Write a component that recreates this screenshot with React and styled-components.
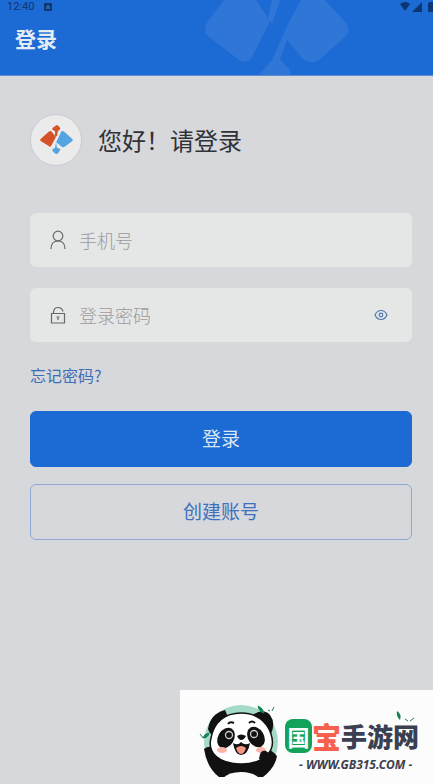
import React, { useState } from 'react';
import styled, { createGlobalStyle } from 'styled-components';

const blue = '#1c6ad3';
const cjk = '"Noto Sans CJK SC", sans-serif';

const GlobalStyle = createGlobalStyle`
  *, *::before, *::after {
    box-sizing: border-box;
  }
  body {
    margin: 0;
    background: #d6d8dc;
    font-family: ${cjk};
  }
`;

const Page = styled.div`
  min-height: 100vh;
  display: flex;
  flex-direction: column;
`;

const Header = styled.header`
  position: relative;
  overflow: hidden;
  height: 76px;
  background: ${blue};
  border-bottom: 1px solid #5f8fd2;
`;

const Watermark = styled.svg`
  position: absolute;
  top: 0;
  right: 83px;
  width: 146px;
  height: 75px;
  fill: #3076d6;
`;

const StatusBar = styled.div`
  position: relative;
  display: flex;
  align-items: center;
  height: 14px;
  padding-left: 7px;
  gap: 10px;
  color: #0d3672;
  font-family: Roboto, sans-serif;
  font-size: 11px;
  line-height: 14px;
`;

const StatusIcons = styled.svg`
  margin-left: auto;
  width: 34px;
  height: 14px;
`;

const Title = styled.h1`
  position: relative;
  margin: 9px 0 0 15px;
  color: #e4ecf6;
  font-size: 21px;
  font-weight: 700;
  line-height: 30px;
`;

const Form = styled.form`
  display: flex;
  flex-direction: column;
  padding: 38px 21px 0 30px;
`;

const Greeting = styled.div`
  display: flex;
  align-items: center;
  gap: 16px;
  margin-bottom: 47px;
`;

const Avatar = styled.svg`
  width: 52px;
  height: 52px;
  border: 1px solid #c9cbcf;
  border-radius: 50%;
  background: #ebebeb;
`;

const Hello = styled.h2`
  margin: 0;
  color: #303236;
  font-size: 24px;
  font-weight: 400;
  line-height: 36px;
`;

const Field = styled.label`
  display: flex;
  align-items: center;
  height: 54px;
  margin-bottom: 21px;
  padding: 0 24px 0 19px;
  gap: 12px;
  border-radius: 6px;
  background: #e5e6e6;
`;

const FieldIcon = styled.svg`
  flex: none;
  width: 18px;
  height: 20px;
  fill: none;
  stroke: #66686c;
  stroke-width: 1.2;
`;

const Input = styled.input`
  flex: 1;
  min-width: 0;
  padding: 0;
  border: 0;
  outline: none;
  background: none;
  color: #303236;
  font-family: ${cjk};
  font-size: 18px;
  font-weight: 300;
  line-height: 26px;
  &::placeholder {
    color: #999b9e;
    opacity: 1;
  }
`;

const EyeButton = styled.button`
  display: flex;
  padding: 0;
  border: 0;
  background: none;
  color: #4d79b4;
  cursor: pointer;
`;

const ForgotLink = styled.a`
  align-self: flex-start;
  margin-bottom: 24px;
  color: #3e6db4;
  font-size: 16px;
  line-height: 24px;
  text-decoration: none;
`;

const Button = styled.button`
  height: 56px;
  margin-bottom: 17px;
  padding: 0 0 2px;
  border: 1px solid ${({ $outline }) => ($outline ? '#91a9d2' : blue)};
  border-radius: 6px;
  background: ${({ $outline }) => ($outline ? 'transparent' : blue)};
  color: ${({ $outline }) => ($outline ? '#3e70bd' : '#dbe6f4')};
  font-family: ${cjk};
  font-size: 19px;
  line-height: 28px;
  cursor: pointer;
`;

const Brand = styled.footer`
  display: flex;
  align-self: flex-end;
  width: 253px;
  height: 94px;
  margin-top: auto;
  padding: 12px 12px 0 13px;
  background: #fcfcfc;
`;

const Panda = styled.svg`
  flex: none;
  width: 88px;
  height: 80px;
`;

const BrandText = styled.div`
  position: relative;
  display: flex;
  flex-direction: column;
  padding-top: 15px;
  padding-left: 4px;
`;

const BrandName = styled.div`
  display: flex;
  align-items: center;
  height: 38px;
  color: #3a4050;
  font-size: 26px;
  font-weight: 900;
  line-height: 36px;
  white-space: nowrap;
`;

const Seal = styled.span`
  display: flex;
  align-items: center;
  justify-content: center;
  width: 27px;
  height: 34px;
  border-radius: 8px;
  background: #12a35a;
  color: #fcfcfc;
  font-size: 22px;
  font-weight: 700;
`;

const Treasure = styled.span`
  color: #f7604f;
  font-size: 29px;
`;

const Leaves = styled.svg`
  position: absolute;
  top: 8px;
  right: 3px;
  width: 20px;
  height: 14px;
`;

const BrandUrl = styled.div`
  padding-left: 14px;
  color: #3a4050;
  font-family: 'Noto Sans', sans-serif;
  font-size: 12px;
  font-style: italic;
  font-weight: 700;
  line-height: 20px;
  white-space: nowrap;
`;

export default function App() {
  const [visible, setVisible] = useState(false);

  return (
    <Page>
      <GlobalStyle />
      <Header>
        <Watermark viewBox="0 0 146 75" aria-hidden="true">
          <path d="M20 0H52L66 21L48 57Q43 65 35 60L4 36Q-2 30 4 21Z" />
          <path d="M68 0H76L68 24L64 18Z" />
          <path d="M97 0H121L141 22Q148 30 141 37L115 60Q107 65 99 59L83 40L76 59L86 70V75H55L68 60L84 24Z" />
        </Watermark>
        <StatusBar>
          <span>12:40</span>
          <svg width="8" height="8" viewBox="0 0 8 8" aria-hidden="true">
            <rect width="8" height="8" rx="1" fill="#0d3672" />
            <path d="M2 6L4 2L6 6M3 5H5" fill="none" stroke="#3c74c0" />
          </svg>
          <StatusIcons viewBox="0 0 34 14" aria-hidden="true" fill="#0d3672">
            <path d="M1 4Q6 0 11 4L6 11Z" />
            <path d="M23 2V12H13Z" />
            <path d="M29 3H30V2H34V12H29Z" />
          </StatusIcons>
        </StatusBar>
        <Title>登录</Title>
      </Header>

      <Form onSubmit={(e) => e.preventDefault()}>
        <Greeting>
          <Avatar viewBox="0 0 52 52" aria-hidden="true">
            <path d="M10 25L19 17Q21 16 22 18L26 23L21 32Q20 34 18 32L10 27Q9 26 10 25Z" fill="#d6532a" />
            <path d="M25 22L25 17L22 15Q22 14 23 13L26 11Q27 10 28 11L30 13Q31 14 30 15L28 17L27 22Z" fill="#d6532a" />
            <path d="M43 25L34 17Q32 16 31 18L26 28L32 33Q33 34 35 33L43 27Q44 26 43 25Z" fill="#54a4e2" />
            <path d="M26 28L25 34L22 36Q22 37 23 38L25 40Q27 41 28 40L30 37Q31 36 30 35L27 34Z" fill="#54a4e2" />
            <path d="M30 18L22 34" stroke="#ebebeb" strokeWidth="2" />
          </Avatar>
          <Hello>您好！请登录</Hello>
        </Greeting>

        <Field>
          <FieldIcon viewBox="0 0 18 20" aria-hidden="true">
            <circle cx="9" cy="6" r="4.800" />
            <path d="M2 19Q2 11 9 11Q16 11 16 19" />
          </FieldIcon>
          <Input type="tel" placeholder="手机号" aria-label="手机号" />
        </Field>

        <Field>
          <FieldIcon viewBox="0 0 18 20" aria-hidden="true">
            <path d="M2.500 8.500H15.500V18H2.500Z" />
            <path d="M4.500 8.500V7Q5 2.500 9 2.500Q13 2.500 14 6.500" />
            <path d="M7.500 12H10.500M9 12V15" />
          </FieldIcon>
          <Input
            type={visible ? 'text' : 'password'}
            placeholder="登录密码"
            aria-label="登录密码"
          />
          <EyeButton
            type="button"
            aria-label="显示密码"
            onClick={() => setVisible(!visible)}
          >
            <svg width="14" height="12" viewBox="0 0 14 12" fill="none" stroke="currentColor" strokeWidth="1.2">
              <path d="M1 6Q3 1.500 7 1.500Q11 1.500 13 6Q11 10.500 7 10.500Q3 10.500 1 6Z" />
              <circle cx="7" cy="6" r="1.800" />
            </svg>
          </EyeButton>
        </Field>

        <ForgotLink href="#forgot">忘记密码?</ForgotLink>
        <Button type="submit">登录</Button>
        <Button type="button" $outline>创建账号</Button>
      </Form>

      <Brand>
        <Panda viewBox="0 0 88 80" aria-hidden="true">
          <circle cx="48" cy="40" r="37" fill="#a5dac8" />
          <path d="M11 47Q17 42 24 48L34 56H62L68 48Q75 44 84 54Q82 66 70 75H26Q14 66 11 47Z" fill="#111" />
          <path d="M15 27Q17 12 32 8L36 17L22 34Q17 33 15 27Z" fill="#111" />
          <path d="M58 14Q70 5 77 13Q83 21 78 32L70 30Z" fill="#111" />
          <path d="M48 11C64 11 74 20 78 32C84 50 70 62 48 62C26 62 14 51 18 36C21 20 32 11 48 11Z" fill="#fff" stroke="#111" strokeWidth="1.500" />
          <ellipse cx="33" cy="36" rx="8" ry="11" fill="#111" transform="rotate(30 33 36)" />
          <ellipse cx="63" cy="35" rx="8" ry="11" fill="#111" transform="rotate(-30 63 35)" />
          <circle cx="36" cy="33" r="3.500" fill="#111" stroke="#ccc" strokeWidth="1.300" />
          <circle cx="61" cy="32" r="3.500" fill="#111" stroke="#ccc" strokeWidth="1.300" />
          <path d="M35 22Q37 19 41 21M56 21Q59 18 62 21" fill="none" stroke="#111" strokeWidth="2" />
          <path d="M44 34Q48 31 53 34Q51 38 48 38Q46 38 44 34Z" fill="#111" />
          <path d="M40 41Q45 44 48 40Q52 44 57 41Q55 53 48 53Q42 53 40 41Z" fill="#111" />
          <path d="M43 46Q48 42 53 46Q51 52 48 52Q45 52 43 46Z" fill="#f59682" />
          <ellipse cx="29" cy="48" rx="5" ry="3" fill="#f9b5aa" />
          <ellipse cx="68" cy="48" rx="5" ry="3" fill="#f9b5aa" />
          <path d="M66 57Q67 47 73 49Q79 52 78 60Z" fill="#111" />
          <path d="M30 76Q36 70 48 70Q60 70 66 76Q48 80 30 76Z" fill="#fcfcfc" />
          <path d="M65 4Q70 6 71 11Q66 10 65 4ZM10 36Q11 32 16 31Q15 36 10 36ZM7 32L10 36M75 8L77 9M79 9L81 5" fill="#168451" stroke="#168451" />
        </Panda>
        <BrandText>
          <BrandName>
            <Seal>国</Seal>
            <Treasure>宝</Treasure>
            <span>手游网</span>
          </BrandName>
          <BrandUrl>- WWW.GB315.COM -</BrandUrl>
          <Leaves viewBox="0 0 20 14" aria-hidden="true">
            <path d="M1 1Q6 4 4 10Q0 7 1 1Z" fill="#168451" />
            <path d="M9 9L12 11M14 11L18 8" stroke="#168451" />
          </Leaves>
        </BrandText>
      </Brand>
    </Page>
  );
}
